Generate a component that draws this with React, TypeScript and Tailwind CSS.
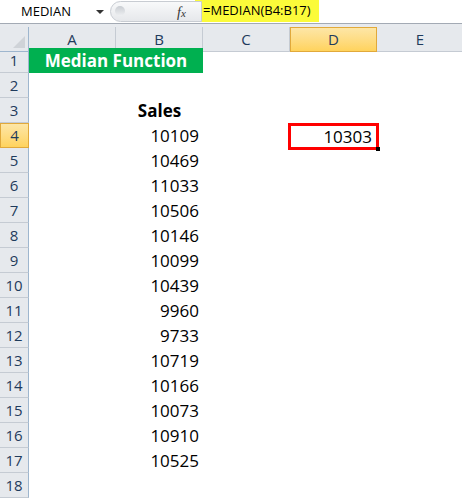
import React from 'react';

const cols = ['A', 'B', 'C', 'D', 'E'];
const sales = [10109, 10469, 11033, 10506, 10146, 10099, 10439, 9960, 9733, 10719, 10166, 10073, 10910, 10525];

const font = { fontFamily: '"Open Sans", "Noto Sans", sans-serif' };

function Cell({ row, col }: { row: number; col: number }) {
  // row 1: merged title over A:B handled separately
  if (row === 3 && col === 1) {
    return <div className="h-[25px] flex items-center justify-center text-[17px] font-bold text-black">Sales</div>;
  }
  if (row >= 4 && row <= 17 && col === 1) {
    return <div className="h-[25px] flex items-center justify-end pr-[4px] text-[17px] text-black">{sales[row - 4]}</div>;
  }
  if (row === 4 && col === 3) {
    return (
      <div className="h-[25px] relative">
        <div className="absolute left-[-2px] top-0 w-[91px] h-[27px] border-[3px] border-[#ff0000] flex items-center justify-end pr-[4px] text-[17px] text-black">
          10303
        </div>
        <div className="absolute left-[86px] top-[24px] w-[4px] h-[4px] bg-black" />
      </div>
    );
  }
  return <div className="h-[25px]" />;
}

export default function App() {
  return (
    <div className="w-[462px] h-[499px] overflow-hidden bg-white" style={font}>
      {/* formula bar */}
      <div className="h-[24px] flex items-stretch border-b border-[#a3aab4] bg-white">
        <div className="w-[108px] flex items-center pl-[21px] text-[13px] text-black relative">
          MEDIAN
          <div className="absolute left-[96px] top-[10px] w-0 h-0 border-l-[4px] border-r-[4px] border-t-[4px] border-l-transparent border-r-transparent border-t-[#333]" />
        </div>
        <div className="w-[87px] flex items-center relative">
          <div className="absolute left-[2px] top-[1px] w-[92px] h-[21px] rounded-l-full border border-[#c8ccd2] bg-gradient-to-b from-[#f8f9fa] to-[#e6e8eb]" />
          <div className="absolute left-[7px] top-[6px] w-[10px] h-[10px] rounded-full bg-gradient-to-b from-[#c9cdd2] to-[#eef0f2]" />
          <span className="absolute left-[69px] top-[2px] text-[14px] italic text-[#333]" style={{ fontFamily: '"Liberation Serif", serif' }}>
            f<span className="text-[11px]">x</span>
          </span>
        </div>
        <div className="w-[124px] h-[22px] bg-[#fbfb3a] flex items-center pl-[8px] text-[13px] text-black">
          =MEDIAN(B4:B17)
        </div>
        <div className="flex-1" />
      </div>
      <div className="h-[3px] bg-[#e7eaee]" />

      {/* column headers */}
      <div className="grid grid-cols-[29px_87px_87px_87px_87px_87px] h-[21px] text-[15px] text-[#1f3b5c]">
        <div className="relative bg-[#e6e9ed] border-r border-b border-[#9eb6ce]">
          <div className="absolute right-[3px] bottom-[3px] w-0 h-0 border-l-[12px] border-t-[12px] border-l-transparent border-t-transparent border-b-0 border-r-[12px] border-r-[#cfd3d8]" style={{ borderTopWidth: 0, borderBottom: '12px solid #cfd3d8', borderRight: 0 }} />
        </div>
        {cols.map((c) =>
          c === 'D' ? (
            <div key={c} className="flex items-center justify-center bg-gradient-to-b from-[#fde6a6] to-[#ffd35c] border border-[#e1a93b]">
              {c}
            </div>
          ) : (
            <div key={c} className="flex items-center justify-center bg-[#e6e9ed] border-r border-b border-[#c5cbd3]">
              {c}
            </div>
          )
        )}
      </div>

      {/* rows */}
      {Array.from({ length: 18 }, (_, i) => i + 1).map((r) => (
        <div key={r} className="grid grid-cols-[29px_87px_87px_87px_87px_87px] h-[25px]">
          {r === 4 ? (
            <div className="flex items-center justify-center text-[15px] text-[#1f3b5c] bg-gradient-to-b from-[#fde6a6] to-[#ffd35c] border border-[#e1a93b]">
              {r}
            </div>
          ) : (
            <div className="flex items-center justify-center text-[15px] text-[#1f3b5c] bg-[#e6e9ed] border-r border-r-[#9eb6ce] border-b border-b-[#c5cbd3]">
              {r}
            </div>
          )}
          {r === 1 ? (
            <>
              <div className="col-span-2 h-[25px] bg-[#00b050] flex items-center justify-center text-[17px] font-bold text-white">
                Median Function
              </div>
              <div />
              <div />
              <div />
            </>
          ) : (
            cols.map((_, ci) => <Cell key={ci} row={r} col={ci} />)
          )}
        </div>
      ))}
    </div>
  );
}
